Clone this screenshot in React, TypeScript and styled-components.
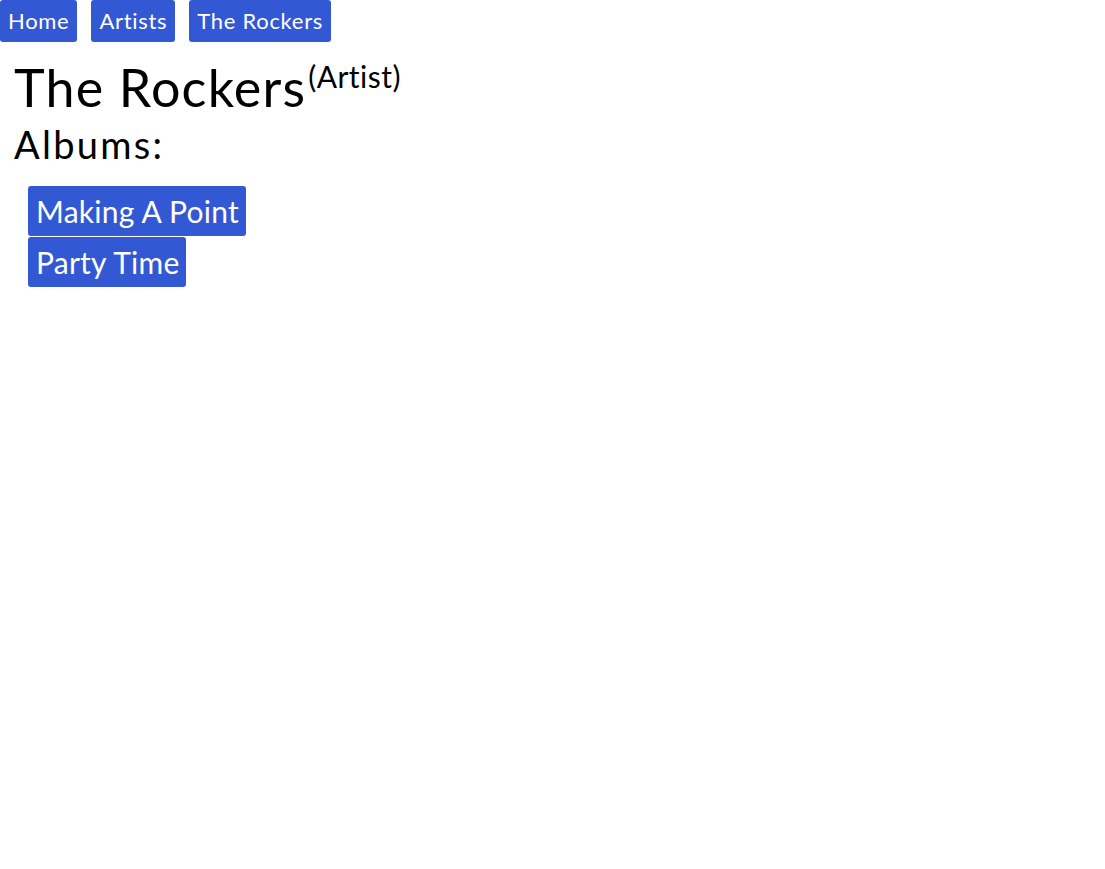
import styled, { createGlobalStyle } from 'styled-components'

const GlobalStyle = createGlobalStyle`
  body {
    margin: 0;
    background: #ffffff;
    font-family: Lato, "Liberation Sans", sans-serif;
    color: #000000;
  }
`

const albums = ['Making A Point', 'Party Time']

const App: React.FC = () => {
  return (
    <>
      <GlobalStyle />
      <Breadcrumbs>
        <Crumb href='#'>Home</Crumb>
        <Crumb href='#'>Artists</Crumb>
        <Crumb href='#'>The Rockers</Crumb>
      </Breadcrumbs>

      <Content>
        <Title>
          The Rockers<Kind>(Artist)</Kind>
        </Title>
        <Subtitle>Albums:</Subtitle>
        <AlbumList>
          {albums.map(name => (
            <li key={name}>
              <AlbumLink href='#'>{name}</AlbumLink>
            </li>
          ))}
        </AlbumList>
      </Content>
    </>
  )
}

export default App

const Breadcrumbs = styled.nav`
  display: flex;
  gap: 14px;
`

const Crumb = styled.a`
  display: block;
  background-color: #3358d4;
  color: white;
  text-decoration: none;
  font-size: 22px;
  letter-spacing: 0.7px;
  line-height: 42px;
  padding: 0 8px;
  border-radius: 3px;
`

const Content = styled.main`
  padding: 0 14px;
`

const Title = styled.h1`
  margin: 14px 0 0;
  font-size: 52px;
  font-weight: 400;
  letter-spacing: 1.2px;
  line-height: 62px;
`

const Kind = styled.sup`
  font-size: 30px;
  letter-spacing: 0.5px;
  vertical-align: top;
  line-height: 40px;
  margin-left: 2px;
`

const Subtitle = styled.h2`
  margin: 0;
  font-size: 38px;
  font-weight: 400;
  letter-spacing: 2.3px;
  line-height: 52px;
`

const AlbumList = styled.ul`
  list-style: none;
  margin: 0;
  padding: 16px 14px;
  display: flex;
  flex-direction: column;
  align-items: flex-start;
  gap: 1px;
`

const AlbumLink = styled.a`
  display: block;
  background-color: #3358d4;
  color: white;
  text-decoration: none;
  font-size: 30px;
  letter-spacing: 0.25px;
  line-height: 50px;
  padding: 0 7px 0 8px;
  border-radius: 3px;
`
